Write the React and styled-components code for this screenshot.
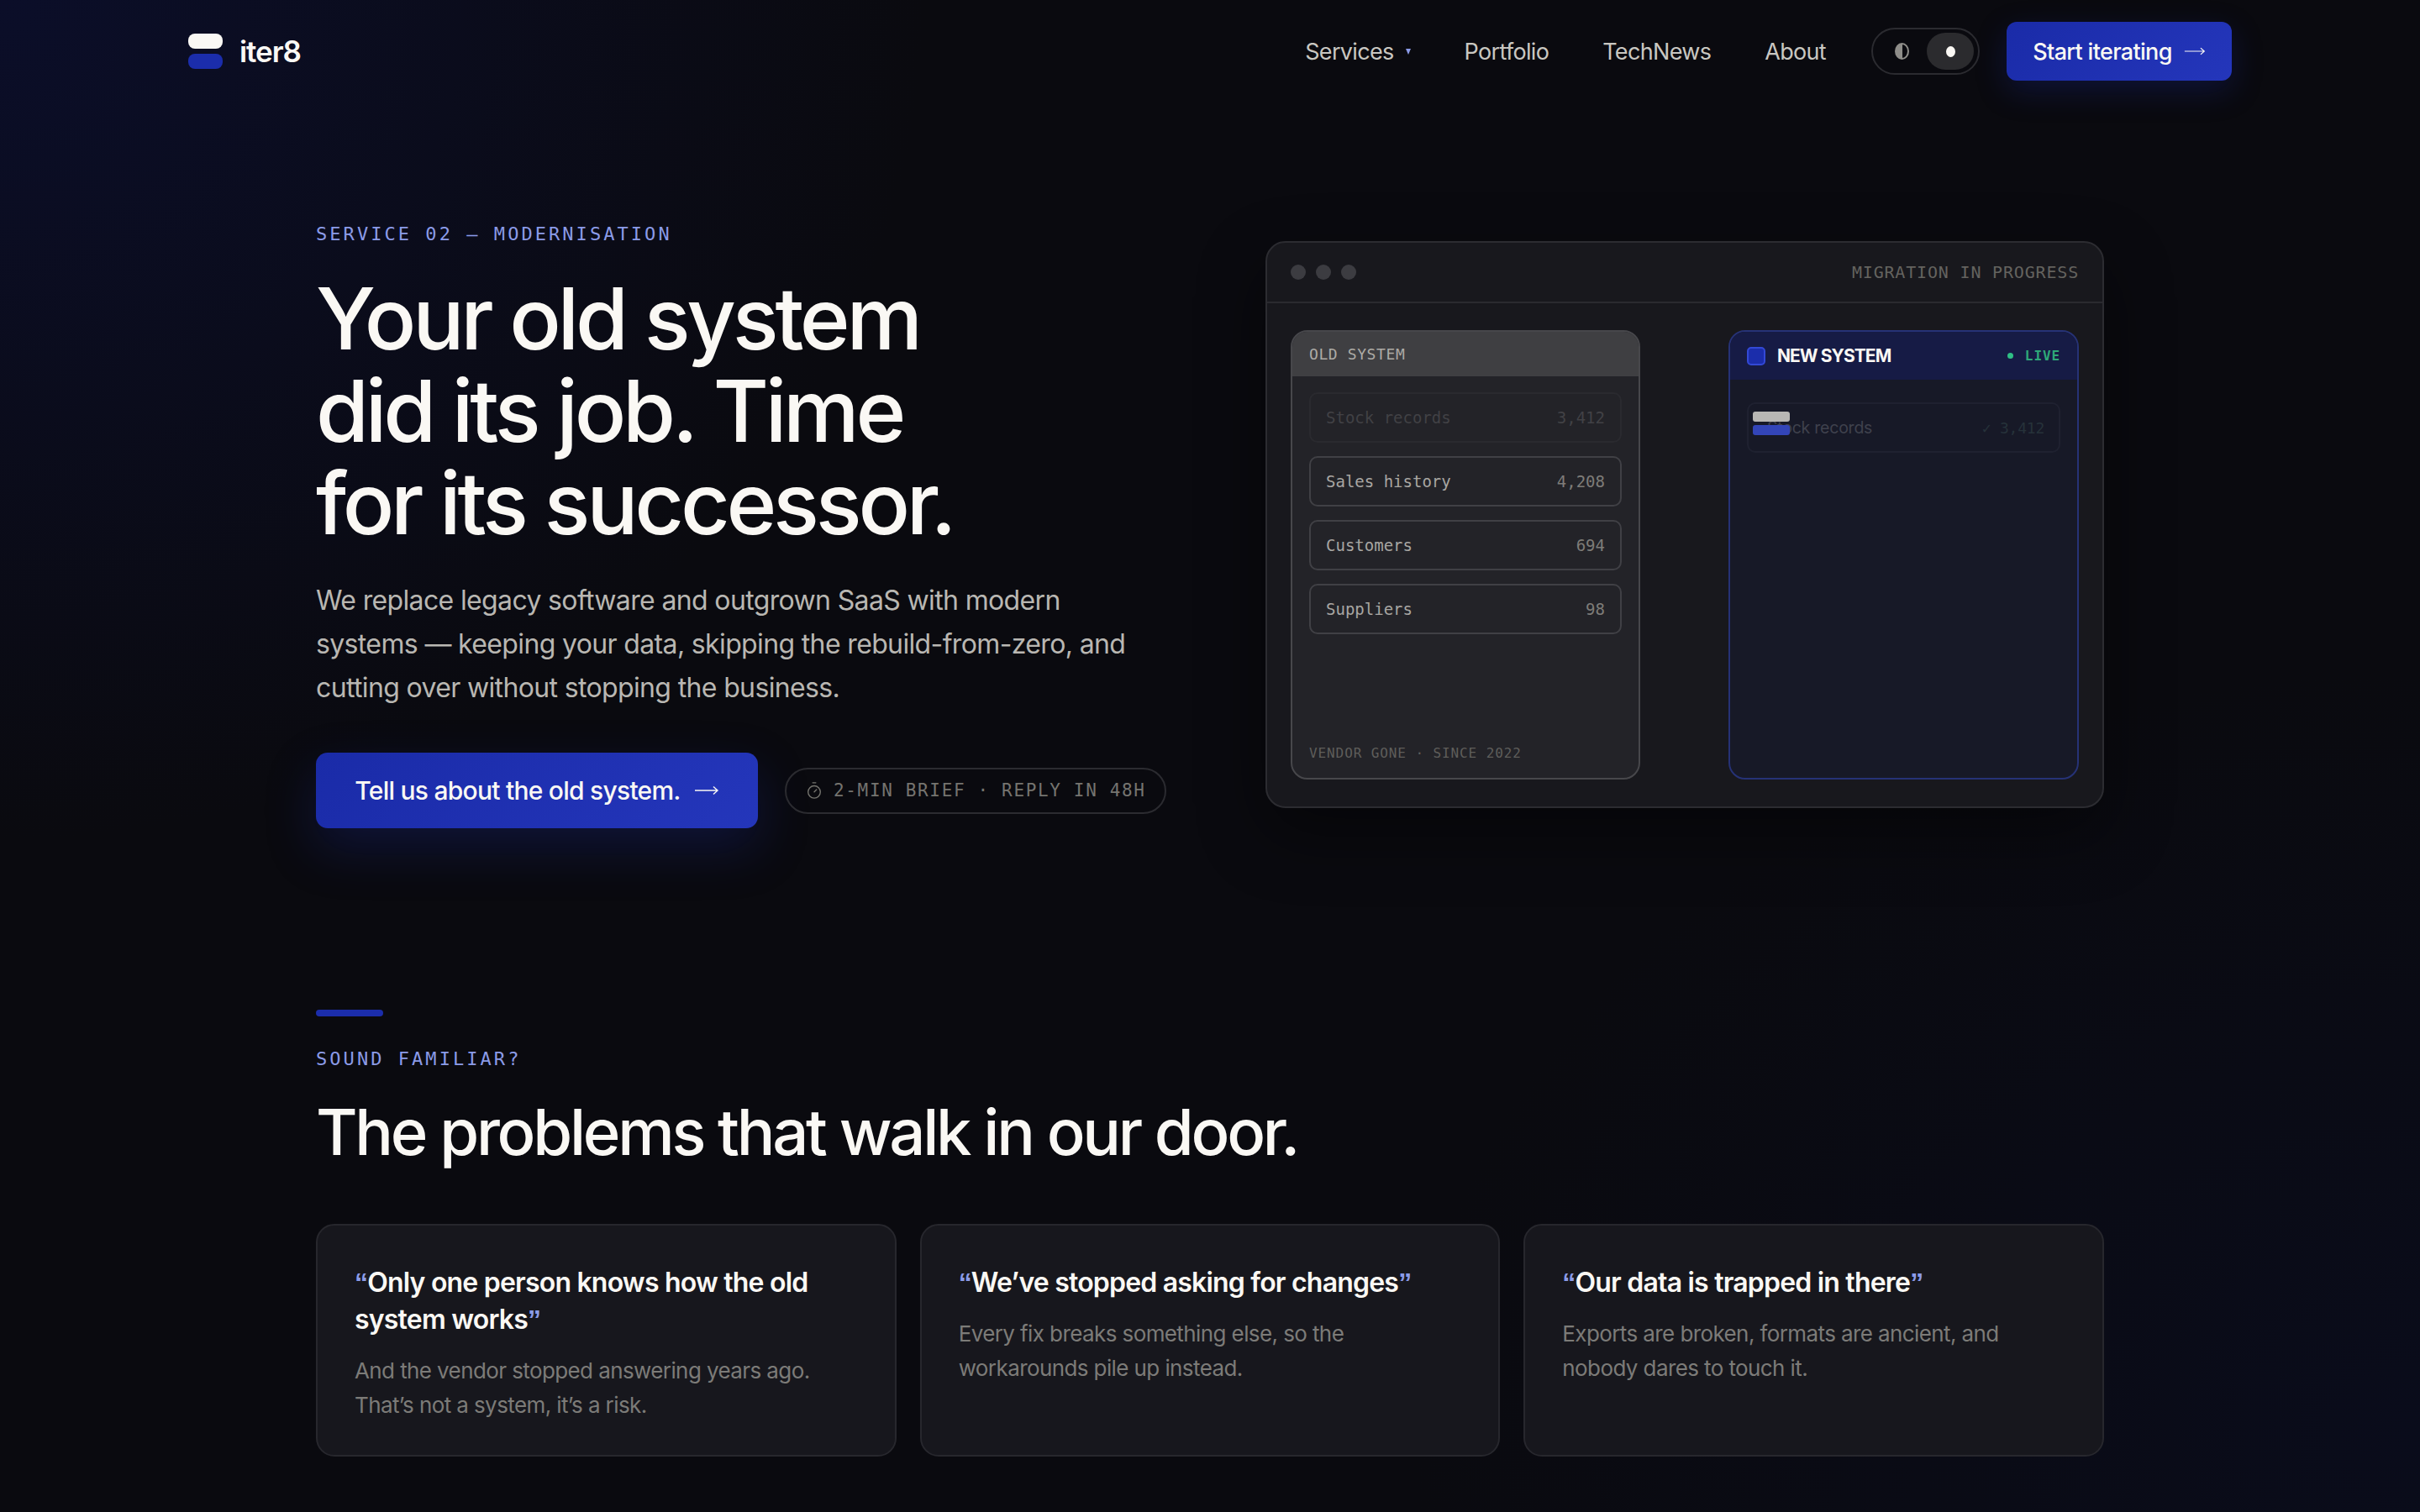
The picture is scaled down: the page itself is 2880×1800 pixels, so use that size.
import styled, { createGlobalStyle } from 'styled-components';
import { Timer } from 'lucide-react';

const sans = `Inter, 'Liberation Sans', sans-serif`;
const mono = `'DejaVu Sans Mono', 'Liberation Mono', monospace`;

const GlobalStyle = createGlobalStyle`
  html, body {
    margin: 0;
    padding: 0;
    background: #0a0a0f;
  }
  * {
    box-sizing: border-box;
  }
`;

const Page = styled.div`
  height: 1800px;
  overflow: hidden;
  background:
    radial-gradient(ellipse 1100px 1000px at 0px 0px, #0b0e29 0%, rgba(11, 14, 41, 0) 100%),
    radial-gradient(ellipse 1200px 900px at 2880px 1700px, #0a0c1b 0%, rgba(10, 12, 27, 0) 100%),
    #0a0a0f;
  font-family: ${sans};
  color: #faf8f4;
`;

const Nav = styled.nav`
  display: flex;
  align-items: center;
  justify-content: space-between;
  width: 2432px;
  margin: 0 auto;
  padding-top: 26px;
`;

const Logo = styled.div`
  display: flex;
  align-items: center;
  gap: 20px;
`;

const LogoMark = styled.div`
  display: flex;
  flex-direction: column;
  gap: 6px;
  width: 41px;
`;

const LogoPill = styled.span`
  height: 18px;
  border-radius: 8px;
  background: ${(p) => (p.$blue ? '#1b2dab' : '#faf8f4')};
`;

const Wordmark = styled.span`
  font-size: 35px;
  font-weight: 600;
  letter-spacing: -0.03em;
`;

const NavRight = styled.div`
  display: flex;
  align-items: center;
`;

const NavLinks = styled.div`
  display: flex;
  align-items: center;
  gap: 64px;
  margin-right: 54px;
`;

const NavLink = styled.a`
  display: flex;
  align-items: center;
  gap: 12px;
  font-size: 27px;
  letter-spacing: -0.025em;
  color: #c9c7c1;
`;

const Caret = styled.span`
  width: 0;
  height: 0;
  margin-left: 2px;
  border-left: 3px solid transparent;
  border-right: 3px solid transparent;
  border-top: 7px solid #8b9be8;
`;

const Toggle = styled.div`
  display: flex;
  align-items: center;
  justify-content: space-between;
  width: 129px;
  height: 56px;
  margin-right: 32px;
  padding: 0 5px 0 26px;
  border: 2px solid #2b2b30;
  border-radius: 28px;
`;

const HalfMoon = styled.span`
  width: 17px;
  height: 20px;
  border-radius: 50%;
  border: 2px solid #8e8d89;
  background: linear-gradient(90deg, #8e8d89 50%, transparent 50%);
`;

const Knob = styled.span`
  display: flex;
  align-items: center;
  justify-content: center;
  width: 56px;
  height: 44px;
  border-radius: 22px;
  background: #2b2b2e;

  &::after {
    content: '';
    width: 11px;
    height: 13px;
    border-radius: 50%;
    background: #faf8f4;
  }
`;

const PrimaryButton = styled.a`
  display: flex;
  align-items: center;
  justify-content: center;
  gap: ${(p) => (p.$large ? '16px' : '14px')};
  width: ${(p) => (p.$large ? '526px' : '268px')};
  height: ${(p) => (p.$large ? '90px' : '70px')};
  border-radius: ${(p) => (p.$large ? '14px' : '12px')};
  background: linear-gradient(135deg, #1a2ba8 0%, #2436bb 100%);
  box-shadow: 0 ${(p) => (p.$large ? '24px 60px' : '12px 36px')} rgba(27, 45, 171, 0.26);
  font-size: ${(p) => (p.$large ? '30px' : '27px')};
  font-weight: 500;
  letter-spacing: -0.025em;
  color: #faf8f4;
`;

const Arrow = styled.svg`
  width: ${(p) => (p.$large ? '30px' : '26px')};
  height: 16px;
  fill: none;
  stroke: currentColor;
  stroke-width: 1.4;
`;

const Main = styled.main`
  width: 2128px;
  margin: 0 auto;
`;

const Hero = styled.section`
  display: grid;
  grid-template-columns: 1019px 998px;
  justify-content: space-between;
  padding-top: 169px;
`;

const Eyebrow = styled.div`
  font-family: ${mono};
  font-size: 22px;
  line-height: 28px;
  letter-spacing: 3.05px;
  color: #8b9be8;
`;

const HeroTitle = styled.h1`
  margin: 31px 0 0;
  font-size: 102px;
  line-height: 110px;
  font-weight: 500;
  letter-spacing: -0.042em;
`;

const HeroText = styled.p`
  margin: 35px 0 0;
  font-size: 32px;
  line-height: 52px;
  letter-spacing: -0.02em;
  color: #b9b7b2;
`;

const Actions = styled.div`
  display: flex;
  align-items: center;
  gap: 32px;
  margin-top: 51px;
`;

const BriefPill = styled.div`
  display: flex;
  align-items: center;
  gap: 12px;
  height: 55px;
  padding: 0 22px;
  border: 2px solid #2b2b30;
  border-radius: 28px;
  font-family: ${mono};
  font-size: 21px;
  letter-spacing: 1.65px;
  color: #75746f;
`;

const Window = styled.div`
  display: flex;
  flex-direction: column;
  height: 675px;
  margin-top: 22px;
  border: 2px solid #2c2c31;
  border-radius: 24px;
  background: #18181d;
  box-shadow: 0 30px 80px rgba(0, 0, 0, 0.45);
`;

const WindowBar = styled.div`
  display: flex;
  align-items: center;
  justify-content: space-between;
  height: 72px;
  padding: 0 28px;
  border-bottom: 2px solid #2a2a2f;
`;

const Dots = styled.div`
  display: flex;
  gap: 12px;
`;

const Dot = styled.span`
  width: 18px;
  height: 18px;
  border-radius: 50%;
  background: #3c3c41;
`;

const BarLabel = styled.span`
  font-family: ${mono};
  font-size: 20px;
  letter-spacing: 0.82px;
  color: #64635f;
`;

const Panels = styled.div`
  display: grid;
  grid-template-columns: 416px 417px;
  justify-content: space-between;
  flex: 1;
  padding: 32px 28px;
`;

const Panel = styled.div`
  position: relative;
  display: flex;
  flex-direction: column;
  border: 2px solid ${(p) => (p.$new ? '#263276' : '#47474b')};
  border-radius: 20px;
  background: ${(p) => (p.$new ? '#171927' : '#232328')};
`;

const OldHeader = styled.div`
  display: flex;
  align-items: center;
  height: 53px;
  padding: 0 20px;
  border-radius: 18px 18px 0 0;
  background: #3f3f42;
  font-family: ${mono};
  font-size: 18px;
  letter-spacing: 0.6px;
  color: #adaba6;
`;

const NewHeader = styled.div`
  display: flex;
  align-items: center;
  gap: 14px;
  height: 57px;
  padding: 0 20px;
  border-radius: 18px 18px 0 0;
  background: #161b45;
`;

const NewBadge = styled.span`
  width: 22px;
  height: 22px;
  border: 2px solid #3349d6;
  border-radius: 5px;
  background: #1b2dab;
`;

const NewTitle = styled.span`
  flex: 1;
  font-size: 21px;
  font-weight: 700;
  letter-spacing: -0.045em;
  color: #faf8f4;
`;

const Live = styled.span`
  display: flex;
  align-items: center;
  gap: 14px;
  font-family: ${mono};
  font-size: 16px;
  font-weight: 700;
  letter-spacing: 0.9px;
  color: #2ea878;

  &::before {
    content: '';
    width: 7px;
    height: 7px;
    border-radius: 50%;
    background: #2fbf85;
  }
`;

const Rows = styled.div`
  display: flex;
  flex-direction: column;
  gap: 16px;
  flex: 1;
  padding: ${(p) => (p.$new ? '27px 20px' : '19px 20px')};
`;

const Row = styled.div`
  position: relative;
  display: flex;
  align-items: center;
  justify-content: space-between;
  height: 60px;
  padding: 0 18px;
  border: 2px solid ${(p) => (p.$faded ? '#2a2a2f' : '#404045')};
  border-radius: 10px;
  font-family: ${mono};
  font-size: 19px;
  color: ${(p) => (p.$faded ? '#414145' : '#a8a6a2')};
`;

const RowValue = styled.span`
  color: ${(p) => (p.$faded ? '#414145' : '#7e7c78')};
`;

const MovedRow = styled(Row)`
  padding: 0 17px 0 22px;
  border-color: #1f2130;
  color: #3f414d;
  font-family: ${sans};
  font-size: 19.5px;
  letter-spacing: -0.012em;
`;

const MovedValue = styled.span`
  font-family: ${mono};
  font-size: 18px;
  color: #26323a;
`;

const MovingChip = styled.span`
  position: absolute;
  left: 5px;
  top: ${(p) => (p.$blue ? '25px' : '9px')};
  width: 44px;
  height: 12px;
  border-radius: 3px;
  background: ${(p) => (p.$blue ? '#3345b8' : '#b8b7b4')};
`;

const PanelFoot = styled.div`
  padding: 0 20px 20px;
  font-family: ${mono};
  font-size: 16px;
  letter-spacing: 0.9px;
  color: #5f5e5b;
`;

const Problems = styled.section`
  padding-top: 216px;
`;

const Rule = styled.div`
  width: 80px;
  height: 8px;
  margin-bottom: 37px;
  border-radius: 4px;
  background: #1b2dab;
`;

const SectionTitle = styled.h2`
  margin: 28px 0 0;
  font-size: 76px;
  line-height: 88px;
  font-weight: 500;
  letter-spacing: -0.043em;
`;

const Cards = styled.div`
  display: grid;
  grid-template-columns: repeat(3, 1fr);
  gap: 28px;
  margin-top: 66px;
`;

const Card = styled.article`
  height: 277px;
  padding: 46px 44px;
  border: 2px solid #27272d;
  border-radius: 22px;
  background: #17171d;
`;

const CardTitle = styled.h3`
  margin: 0;
  font-size: 32px;
  line-height: 44px;
  font-weight: 600;
  letter-spacing: -0.025em;
  color: #faf8f4;
`;

const Quote = styled.span`
  font-family: 'Liberation Sans', sans-serif;
  color: #8b9be8;
`;

const CardText = styled.p`
  margin: 18px 0 0;
  font-size: 26px;
  line-height: 41px;
  letter-spacing: -0.023em;
  color: #7c7b78;
`;

const rows = [
  { name: 'Sales history', value: '4,208' },
  { name: 'Customers', value: '694' },
  { name: 'Suppliers', value: '98' },
];

const problems = [
  {
    title: 'Only one person knows how the old system works',
    text: 'And the vendor stopped answering years ago. That’s not a system, it’s a risk.',
  },
  {
    title: 'We’ve stopped asking for changes',
    text: 'Every fix breaks something else, so the workarounds pile up instead.',
  },
  {
    title: 'Our data is trapped in there',
    text: 'Exports are broken, formats are ancient, and nobody dares to touch it.',
  },
];

const ArrowIcon = ({ large }) => (
  <Arrow $large={large} viewBox="0 0 30 16">
    <path d="M1 8h27M23 3.5L28 8l-5 4.5" />
  </Arrow>
);

const App = () => (
  <Page>
    <GlobalStyle />
    <Nav>
      <Logo>
        <LogoMark>
          <LogoPill />
          <LogoPill $blue />
        </LogoMark>
        <Wordmark>iter8</Wordmark>
      </Logo>
      <NavRight>
        <NavLinks>
          <NavLink>
            Services <Caret />
          </NavLink>
          <NavLink>Portfolio</NavLink>
          <NavLink>TechNews</NavLink>
          <NavLink>About</NavLink>
        </NavLinks>
        <Toggle>
          <HalfMoon />
          <Knob />
        </Toggle>
        <PrimaryButton>
          Start iterating <ArrowIcon />
        </PrimaryButton>
      </NavRight>
    </Nav>
    <Main>
      <Hero>
        <div>
          <Eyebrow>SERVICE 02 — MODERNISATION</Eyebrow>
          <HeroTitle>
            Your old system
            <br />
            did its job. Time
            <br />
            for its successor.
          </HeroTitle>
          <HeroText>
            We replace legacy software and outgrown SaaS with modern
            <br />
            systems — keeping your data, skipping the rebuild-from-zero, and
            <br />
            cutting over without stopping the business.
          </HeroText>
          <Actions>
            <PrimaryButton $large>
              Tell us about the old system. <ArrowIcon large />
            </PrimaryButton>
            <BriefPill>
              <Timer size={22} strokeWidth={1.5} />
              2-MIN BRIEF · REPLY IN 48H
            </BriefPill>
          </Actions>
        </div>
        <Window>
          <WindowBar>
            <Dots>
              <Dot />
              <Dot />
              <Dot />
            </Dots>
            <BarLabel>MIGRATION IN PROGRESS</BarLabel>
          </WindowBar>
          <Panels>
            <Panel>
              <OldHeader>OLD SYSTEM</OldHeader>
              <Rows>
                <Row $faded>
                  Stock records <RowValue $faded>3,412</RowValue>
                </Row>
                {rows.map((row) => (
                  <Row key={row.name}>
                    {row.name} <RowValue>{row.value}</RowValue>
                  </Row>
                ))}
              </Rows>
              <PanelFoot>VENDOR GONE · SINCE 2022</PanelFoot>
            </Panel>
            <Panel $new>
              <NewHeader>
                <NewBadge />
                <NewTitle>NEW SYSTEM</NewTitle>
                <Live>LIVE</Live>
              </NewHeader>
              <Rows $new>
                <MovedRow>
                  Stock records <MovedValue>✓ 3,412</MovedValue>
                  <MovingChip />
                  <MovingChip $blue />
                </MovedRow>
              </Rows>
            </Panel>
          </Panels>
        </Window>
      </Hero>
      <Problems>
        <Rule />
        <Eyebrow>SOUND FAMILIAR?</Eyebrow>
        <SectionTitle>The problems that walk in our door.</SectionTitle>
        <Cards>
          {problems.map((item) => (
            <Card key={item.title}>
              <CardTitle>
                <Quote>“</Quote>
                {item.title}
                <Quote>”</Quote>
              </CardTitle>
              <CardText>{item.text}</CardText>
            </Card>
          ))}
        </Cards>
      </Problems>
    </Main>
  </Page>
);

export default App;
